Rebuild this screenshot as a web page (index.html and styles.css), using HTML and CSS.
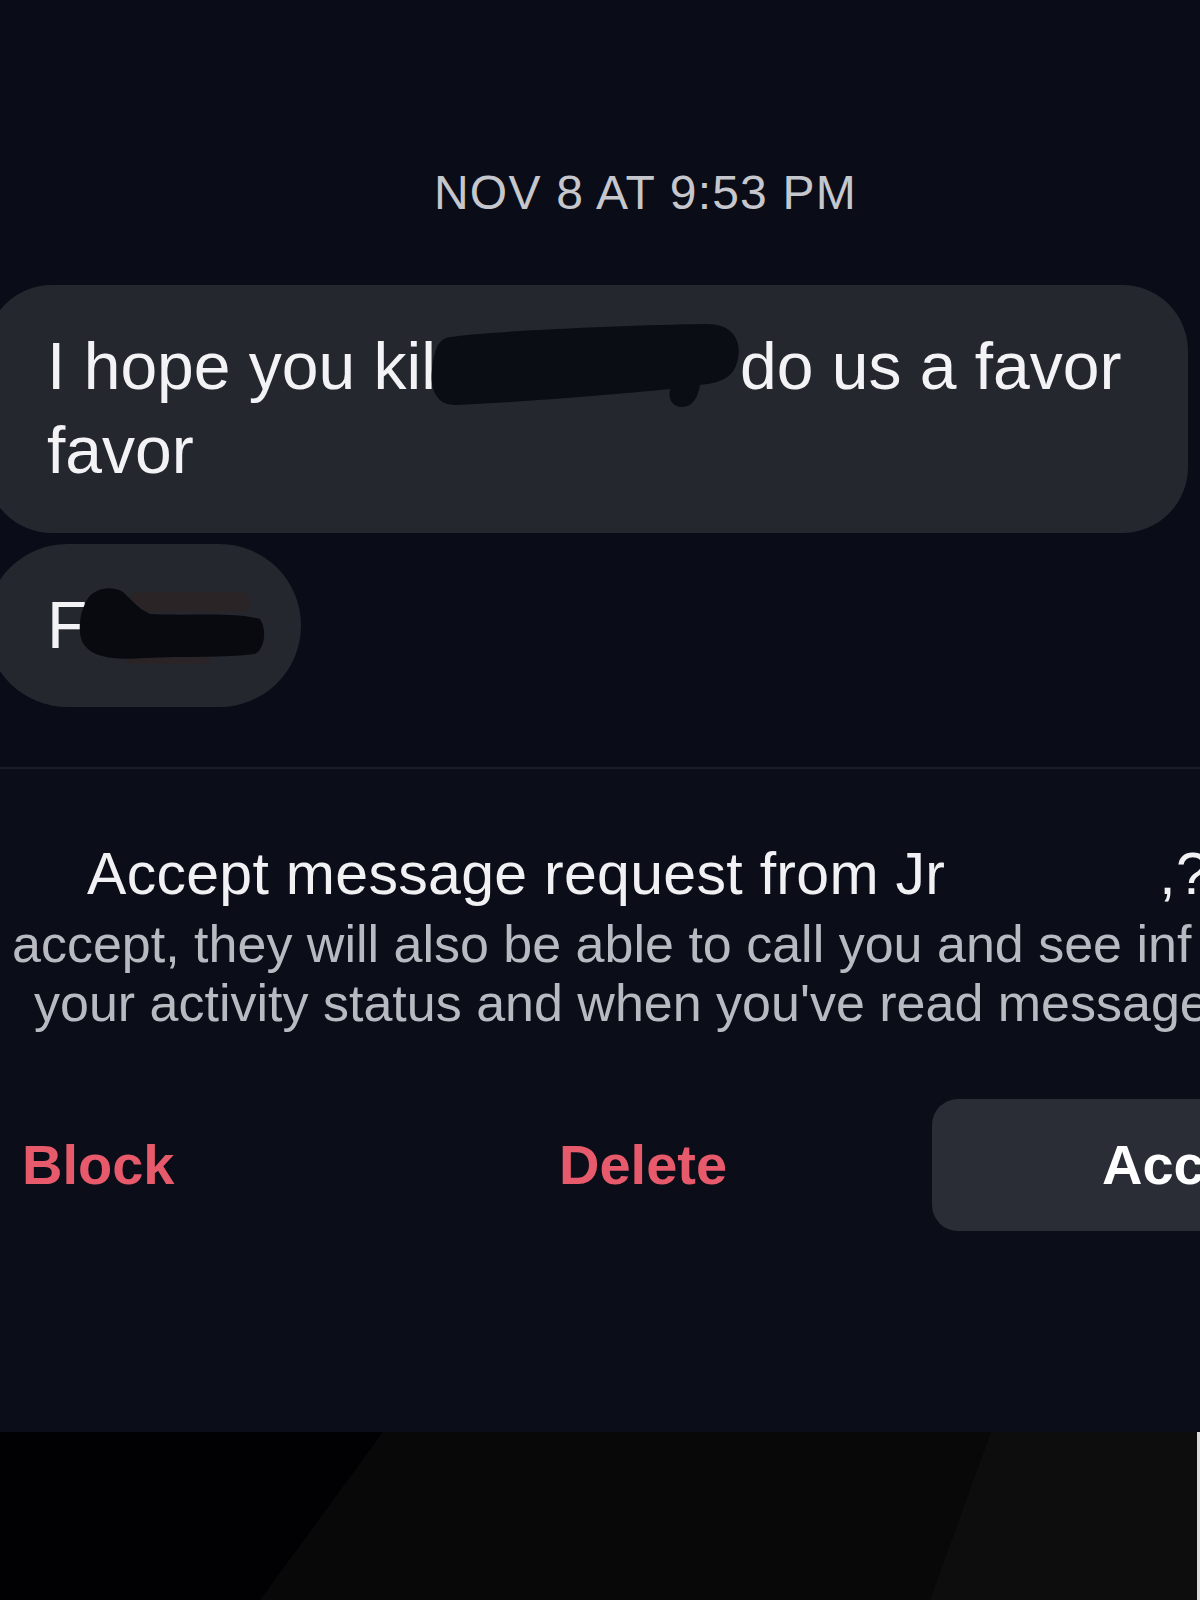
FILE: index.html
```html
<!DOCTYPE html>
<html lang="en">
<head>
<meta charset="utf-8">
<title>Message request</title>
<link rel="stylesheet" href="styles.css">
</head>
<body>
<div class="screen">
  <section class="thread">
    <div class="stamp">NOV 8 AT 9:53 PM</div>
    <div class="bubble bubble-long">I hope you kil<svg class="redact redact-one" width="310" height="86" viewBox="0 0 310 86" aria-hidden="true"><path d="M20 14 C60 8 200 2 275 1 C300 0 312 15 308 35 C305 55 290 60 270 62 C268 75 262 84 252 84 C242 84 238 76 240 66 C180 72 80 80 25 82 C5 82 0 64 2 47 C4 27 8 16 20 14 Z" fill="#0b0d14"/></svg>do us a favor<br>favor</div>
    <div class="bubble bubble-short">F<svg class="redact redact-two" width="190" height="80" viewBox="0 0 190 80" aria-hidden="true"><rect x="55" y="8" width="120" height="20" rx="8" fill="#2a2427"/><rect x="50" y="62" width="85" height="18" rx="6" fill="#2a2427"/><path d="M10 20 C15 5 35 0 48 8 C55 14 62 24 75 30 C110 32 160 28 185 35 C192 45 190 65 180 70 C150 74 110 72 70 74 C40 76 20 74 10 62 C2 52 4 32 10 20 Z" fill="#090a10"/></svg></div>
  </section>
  <section class="request">
    <h1 class="request-title"><span>Accept message request from Jr</span><span class="title-end">,?</span></h1>
    <p class="request-line line-a">accept, they will also be able to call you and see inf</p>
    <p class="request-line line-b">your activity status and when you've read message</p>
    <div class="actions">
      <span class="action action-danger">Block</span>
      <span class="action action-danger">Delete</span>
      <span class="accept-btn"><span class="action">Acc</span></span>
    </div>
  </section>
  <div class="footer-strip">
    <svg width="1200" height="168" viewBox="0 0 1200 168" preserveAspectRatio="none" aria-hidden="true">
      <rect x="0" y="0" width="1200" height="168" fill="#080808"/>
      <polygon points="0,0 383,0 260,168 0,168" fill="#010103"/>
      <polygon points="991,0 1200,0 1200,168 930,168" fill="#0d0d0d"/>
      <rect x="1197" y="0" width="3" height="168" fill="#dcdcdc"/>
    </svg>
  </div>
</div>
</body>
</html>
```
FILE: styles.css
```css
html, body {
  margin: 0;
  padding: 0;
  background: #0a0d17;
}
body {
  width: 1200px;
  height: 1600px;
  overflow: hidden;
  font-family: "Liberation Sans", Arial, sans-serif;
}
.screen {
  width: 1200px;
  height: 1600px;
  overflow: hidden;
  display: flex;
  flex-direction: column;
}
.thread {
  padding-top: 169px;
}
.stamp {
  font-size: 48px;
  line-height: 48px;
  letter-spacing: 1.2px;
  color: #c6c7cc;
  padding-left: 434px;
  white-space: nowrap;
}
.bubble {
  background: #25272f;
  color: #f3f3f5;
  font-size: 66px;
  line-height: 82px;
  white-space: nowrap;
  border-radius: 66px;
  margin-left: -14px;
  padding-left: 61px;
  box-sizing: border-box;
}
.bubble-long {
  margin-top: 68px;
  width: 1202px;
  padding-top: 38px;
  padding-bottom: 42px;
}
.bubble-short {
  margin-top: 11px;
  width: 315px;
  padding-top: 40px;
  padding-bottom: 41px;
  border-radius: 82px;
}
.redact {
  display: inline-block;
}
.redact-one {
  margin-left: -6px;
  vertical-align: -20px;
}
.redact-two {
  margin-left: -12px;
  vertical-align: -16px;
}
.request {
  margin-top: 60px;
  border-top: 2px solid #1a1e28;
  padding-top: 70px;
  background: #0b0e18;
  flex: 1;
}
.request-title {
  margin: 0;
  font-weight: normal;
  font-size: 59px;
  line-height: 70px;
  letter-spacing: 0.3px;
  color: #f1f1f3;
  padding-left: 87px;
  display: flex;
  white-space: nowrap;
}
.title-end {
  margin-left: 214px;
}
.request-line {
  margin: 0;
  font-size: 52px;
  line-height: 59px;
  color: #b8bac1;
  white-space: nowrap;
}
.line-a {
  margin-top: 6px;
  padding-left: 12px;
}
.line-b {
  padding-left: 34px;
}
.actions {
  margin-top: 66px;
  display: grid;
  grid-template-columns: 537px 373px 420px;
  align-items: center;
  padding-left: 22px;
  white-space: nowrap;
}
.action {
  font-size: 56px;
  font-weight: bold;
  line-height: 70px;
}
.action-danger {
  color: #e65a6b;
}
.accept-btn {
  height: 132px;
  background: #2a2d36;
  border-radius: 26px;
  display: flex;
  align-items: center;
  padding-left: 170px;
  color: #ffffff;
}
.footer-strip {
  height: 168px;
  flex: none;
}
.footer-strip svg {
  display: block;
}
```
